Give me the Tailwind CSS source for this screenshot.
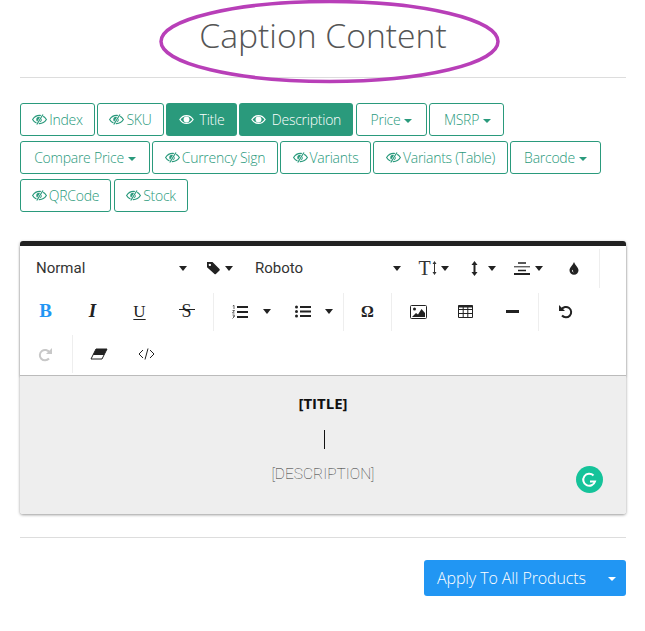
<!DOCTYPE html>
<html lang="en">
<head>
    <meta charset="UTF-8">
    <title>Caption Content</title>
    <script src="https://cdn.jsdelivr.net/npm/@tailwindcss/browser@4"></script>
</head>
<body class="bg-white font-['Open_Sans',sans-serif]">
<svg class="hidden">
    <symbol id="eye-off" viewBox="0 0 16 12">
        <path d="M.5 6C2.300 3.200 5 1.600 8 1.600S13.700 3.200 15.500 6C13.700 8.800 11 10.400 8 10.400S2.300 8.800.5 6Z" fill="none" stroke="currentColor" stroke-width="1.300"/>
        <circle cx="7.500" cy="6" r="3" fill="currentColor"/>
        <path d="M11.800.5 5 11.500" stroke="#fff" stroke-width="2.600"/>
        <path d="M11.800.5 5 11.500" stroke="currentColor" stroke-width="1.300"/>
    </symbol>
    <symbol id="eye" viewBox="0 0 16 12">
        <path d="M.8 6C2.500 3.200 5 1.700 8 1.700S13.500 3.200 15.200 6C13.500 8.800 11 10.300 8 10.300S2.500 8.800.8 6Z" fill="none" stroke="currentColor" stroke-width="1.400"/>
        <circle cx="8" cy="6" r="3.200" fill="currentColor"/>
    </symbol>
</svg>

<div class="relative w-[645px] h-[631px] overflow-hidden">
    <div class="ml-5 mr-[19px] h-[78px] border-b border-[#ddd] text-center">
        <h1 class="font-light text-[33.7px] leading-[71px] text-[#555]">Caption Content</h1>
    </div>
    <svg class="absolute left-[158px] top-0" width="343" height="84" viewBox="0 0 343 84">
        <ellipse cx="171.500" cy="41.500" rx="168.500" ry="40" fill="none" stroke="#b83fb8" stroke-width="3.500"/>
    </svg>

    <!-- field buttons -->
    <div class="ml-5 mr-[19px] mt-[25px] flex flex-col gap-[5px] text-sm tracking-[-0.25px] font-light text-[#2a9a7c]">
        <div class="flex h-[33px] gap-[2px]">
            <button class="w-[75px] flex items-center justify-center gap-[2px] border border-[#2a9a7c] rounded-[3px]"><svg class="w-[15px] h-[11px]"><use href="#eye-off"/></svg>Index</button>
            <button class="w-[67px] flex items-center justify-center gap-[2px] border border-[#2a9a7c] rounded-[3px]"><svg class="w-[15px] h-[11px]"><use href="#eye-off"/></svg>SKU</button>
            <button class="w-[71px] flex items-center justify-center gap-[6px] bg-[#2a9a7c] text-white rounded-[3px]"><svg class="w-[15px] h-[11px]"><use href="#eye"/></svg>Title</button>
            <button class="w-[114px] flex items-center justify-center gap-[6px] bg-[#2a9a7c] text-white rounded-[3px]"><svg class="w-[15px] h-[11px]"><use href="#eye"/></svg>Description</button>
            <button class="ml-[1px] w-[71px] flex items-center justify-center gap-[4px] border border-[#2a9a7c] rounded-[3px]">Price<span class="border-x-4 border-t-4 border-x-transparent border-t-[#2a9a7c] mt-[2px]"></span></button>
            <button class="w-[75px] flex items-center justify-center gap-[4px] pl-[2px] border border-[#2a9a7c] rounded-[3px]">MSRP<span class="border-x-4 border-t-4 border-x-transparent border-t-[#2a9a7c] mt-[2px]"></span></button>
        </div>
        <div class="flex h-[33px] gap-[2px]">
            <button class="w-[130px] flex items-center justify-center gap-[4px] border border-[#2a9a7c] rounded-[3px]">Compare Price<span class="border-x-4 border-t-4 border-x-transparent border-t-[#2a9a7c] mt-[2px]"></span></button>
            <button class="w-[126px] flex items-center justify-center gap-[2px] border border-[#2a9a7c] rounded-[3px]"><svg class="w-[15px] h-[11px]"><use href="#eye-off"/></svg>Currency Sign</button>
            <button class="w-[91px] flex items-center justify-center gap-[2px] border border-[#2a9a7c] rounded-[3px]"><svg class="w-[15px] h-[11px]"><use href="#eye-off"/></svg>Variants</button>
            <button class="w-[135px] flex items-center justify-center gap-[2px] border border-[#2a9a7c] rounded-[3px]"><svg class="w-[15px] h-[11px]"><use href="#eye-off"/></svg>Variants (Table)</button>
            <button class="w-[91px] flex items-center justify-center gap-[4px] border border-[#2a9a7c] rounded-[3px]">Barcode<span class="border-x-4 border-t-4 border-x-transparent border-t-[#2a9a7c] mt-[2px]"></span></button>
        </div>
        <div class="flex h-[33px] gap-[3px]">
            <button class="w-[91px] flex items-center justify-center gap-[2px] border border-[#2a9a7c] rounded-[3px]"><svg class="w-[15px] h-[11px]"><use href="#eye-off"/></svg>QRCode</button>
            <button class="w-[74px] flex items-center justify-center gap-[2px] border border-[#2a9a7c] rounded-[3px]"><svg class="w-[15px] h-[11px]"><use href="#eye-off"/></svg>Stock</button>
        </div>
    </div>

    <!-- editor -->
    <div class="relative ml-5 mr-[19px] mt-[29px] rounded-[3px] border-t-[5px] border-[#222] shadow-[0_1px_3px_rgba(0,0,0,0.4)]">
        <div class="h-[130px] text-[#333] font-['Roboto',sans-serif] text-[15px] border-b border-[#bbb] shadow-[0_1px_2px_rgba(0,0,0,0.25)]">
            <!-- row 1 -->
            <div class="flex h-[44px] items-center">
                <div class="w-[176px] pl-4 pr-[9px] flex items-center justify-between"><span>Normal</span><span class="border-x-[4.5px] border-t-[5px] border-x-transparent border-t-[#222]"></span></div>
                <div class="w-[47px] flex items-center justify-center gap-[4px]">
                    <svg width="15" height="14" viewBox="0 0 15 14"><path d="M1 1h5.500l7 7a1 1 0 0 1 0 1.400l-3.600 3.600a1 1 0 0 1-1.400 0L1 6.200ZM3.800 2.700a1.200 1.200 0 1 0 .1 0Z" fill="#222" fill-rule="evenodd"/></svg>
                    <span class="border-x-[4.5px] border-t-[5px] border-x-transparent border-t-[#222]"></span>
                </div>
                <div class="w-[168px] pl-3 pr-[10px] flex items-center justify-between"><span>Roboto</span><span class="border-x-[4.5px] border-t-[5px] border-x-transparent border-t-[#222]"></span></div>
                <div class="w-[48px] pr-[3px] flex items-center justify-center gap-[4px]">
                    <span class="flex items-center font-['Liberation_Serif',serif] text-[20px] leading-none text-[#333]">T<svg class="ml-[1px]" width="5" height="14" viewBox="0 0 5 14"><path d="M2.500 1v12" stroke="#333" stroke-width="1"/><path d="M.5 3l2-3 2 3ZM.5 11l2 3 2-3Z" fill="#333"/></svg></span>
                    <span class="border-x-[4.5px] border-t-[5px] border-x-transparent border-t-[#222]"></span>
                </div>
                <div class="w-[47px] pl-[1px] flex items-center justify-center gap-[10px]">
                    <svg width="7" height="15" viewBox="0 0 7 15"><path d="M3.500 2v11" stroke="#222" stroke-width="2"/><path d="M.5 4l3-4 3 4ZM.5 11l3 4 3-4Z" fill="#222"/></svg>
                    <span class="border-x-[4.5px] border-t-[5px] border-x-transparent border-t-[#222]"></span>
                </div>
                <div class="w-[47px] pr-[3px] flex items-center justify-center gap-[5px]">
                    <svg width="16" height="13" viewBox="0 0 16 13"><path d="M4 1h8M4 8.500h8" stroke="#222" stroke-width="1.500"/><path d="M0 4.800h16" stroke="#222" stroke-width="1"/><path d="M0 12h16" stroke="#222" stroke-width="2"/></svg>
                    <span class="border-x-[4.5px] border-t-[5px] border-x-transparent border-t-[#222]"></span>
                </div>
                <div class="w-[41px] flex items-center justify-center">
                    <svg width="10" height="13" viewBox="0 0 10 13"><path d="M5 0C6 3 9.500 5.500 9.500 8.300A4.500 4.500 0 0 1 .5 8.300C.5 5.500 4 3 5 0ZM3 8.300c0 1.300.8 2.200 2 2.200-1-.6-1.200-1.300-1.200-2.700Z" fill="#222" fill-rule="evenodd"/></svg>
                </div>
                <div class="w-[1px] h-[39px] ml-[5px] bg-[#eee]"></div>
            </div>
            <!-- row 2 -->
            <div class="flex h-[43px] items-center text-[#222]">
                <div class="w-[2px]"></div>
                <div class="w-[47px] text-center font-['Liberation_Serif',serif] font-bold text-[19px] text-[#2196f3]">B</div>
                <div class="w-[47px] text-center font-['Liberation_Serif',serif] italic font-bold text-[19px]">I</div>
                <div class="w-[47px] text-center font-['Liberation_Serif',serif] text-[17px] underline underline-offset-2">U</div>
                <div class="relative w-[47px] text-center font-['Liberation_Serif',serif] text-[18px]">S<span class="absolute left-[16px] top-[11px] w-[16px] h-[1px] bg-[#222]"></span></div>
                <div class="w-[3px]"></div>
                <div class="w-[1px] h-[38px] bg-[#eee]"></div>
                <div class="w-[34px] flex justify-end">
                    <svg width="16" height="14" viewBox="0 0 16 14"><path d="M5 2h11M5 7h11M5 12h11" stroke="#222" stroke-width="2"/><path d="M.8 1 2 .3V4M.5 5.500h2L.5 8h2M.5 10h2l-1 1.500h1l-2 2" fill="none" stroke="#222" stroke-width=".7"/></svg>
                </div>
                <div class="w-[23px] flex justify-end"><span class="border-x-[4.5px] border-t-[5px] border-x-transparent border-t-[#222]"></span></div>
                <div class="w-[40px] flex justify-end">
                    <svg width="16" height="13" viewBox="0 0 16 13"><path d="M5 2h11M5 6.500h11M5 11h11" stroke="#222" stroke-width="2"/><circle cx="1.500" cy="2" r="1.500" fill="#222"/><circle cx="1.500" cy="6.500" r="1.500" fill="#222"/><circle cx="1.500" cy="11" r="1.500" fill="#222"/></svg>
                </div>
                <div class="w-[22px] flex justify-end"><span class="border-x-[4.5px] border-t-[5px] border-x-transparent border-t-[#222]"></span></div>
                <div class="w-[10px]"></div>
                <div class="w-[1px] h-[38px] bg-[#eee]"></div>
                <div class="w-[47px] text-center font-['Liberation_Serif',serif] font-bold text-[16px]">Ω</div>
                <div class="w-[1px] h-[38px] bg-[#eee]"></div>
                <div class="w-[52px] flex justify-center">
                    <svg width="17" height="14" viewBox="0 0 17 14"><rect x=".5" y=".5" width="16" height="13" rx="1" fill="none" stroke="#222"/><circle cx="4.500" cy="4" r="1.500" fill="#222"/><path d="M2 12l4-4 2 1.500L11.500 4 15 8v4Z" fill="#222"/></svg>
                </div>
                <div class="w-[42px] flex justify-center">
                    <svg width="15" height="13" viewBox="0 0 15 13"><path d="M.5.5h14v12H.5ZM.5 4.500h14M.5 8.500h14M5.200.5v12M9.800.5v12" fill="none" stroke="#222"/><path d="M.5 1.500h14" stroke="#222" stroke-width="2"/></svg>
                </div>
                <div class="w-[52px] flex justify-center"><span class="w-[13px] h-[3px] bg-[#222]"></span></div>
                <div class="w-[1px] h-[38px] bg-[#eee]"></div>
                <div class="w-[52px] flex justify-center">
                    <svg width="15" height="15" viewBox="0 0 15 15"><path d="M3.500 5.500A5.200 5.200 0 1 1 4 11.500" fill="none" stroke="#222" stroke-width="2"/><path d="M1 1v6h6Z" fill="#222"/></svg>
                </div>
            </div>
            <!-- row 3 -->
            <div class="flex h-[42px] items-center">
                <div class="w-[2px]"></div>
                <div class="w-[47px] flex justify-center">
                    <svg width="15" height="15" viewBox="0 0 15 15"><path d="M11.500 5.500A5.200 5.200 0 1 0 11 11.500" fill="none" stroke="#c8c8c8" stroke-width="2"/><path d="M14 1v6H8Z" fill="#c8c8c8"/></svg>
                </div>
                <div class="w-[3px]"></div>
                <div class="w-[1px] h-[38px] bg-[#eee]"></div>
                <div class="w-[51px] flex justify-center">
                    <svg width="18" height="12" viewBox="0 0 18 12"><path d="M6 1h11l-5 10H1Z" fill="#fff" stroke="#222"/><path d="M6 1h11l-3 6H3Z" fill="#222"/></svg>
                </div>
                <div class="w-[44px] flex justify-center">
                    <svg width="17" height="12" viewBox="0 0 17 12"><path d="M5 2 1 6l4 4M12 2l4 4-4 4M10 .5 7 11.500" fill="none" stroke="#222" stroke-width="1"/></svg>
                </div>
            </div>
        </div>
        <div class="h-[138px] bg-[#eee] text-center rounded-b-[3px]">
            <p class="pt-[17px] text-[15px] font-bold leading-[20px] text-[#111]">[TITLE]</p>
            <div class="ml-[304px] mt-[17px] w-[1px] h-[19px] bg-[#111]"></div>
            <p class="mt-[15px] font-['Roboto',sans-serif] font-thin text-[15.5px] leading-[20px] text-[#333]">[DESCRIPTION]</p>
        </div>
        <svg class="absolute left-[556px] top-[220px]" width="27" height="27" viewBox="0 0 27 27">
            <circle cx="13.500" cy="13.500" r="13.500" fill="#15c39a"/>
            <path d="M17.500 9.500A6 6 0 1 0 19 15.500h-5" fill="none" stroke="#fff" stroke-width="2"/>
        </svg>
    </div>

    <div class="ml-5 mr-[19px] mt-[23px] border-t border-[#ddd]"></div>

    <div class="ml-5 mr-[19px] mt-[22px] flex justify-end">
        <button class="w-[202px] h-9 flex items-center bg-[#2196f3] text-white rounded-[3px] font-light text-base tracking-[-0.1px]">
            <span class="pl-[13px] w-[181px] text-left">Apply To All Products</span>
            <span class="ml-[3px] border-x-4 border-t-4 border-x-transparent border-t-white mt-[2px]"></span>
        </button>
    </div>
</div>
</body>
</html>
